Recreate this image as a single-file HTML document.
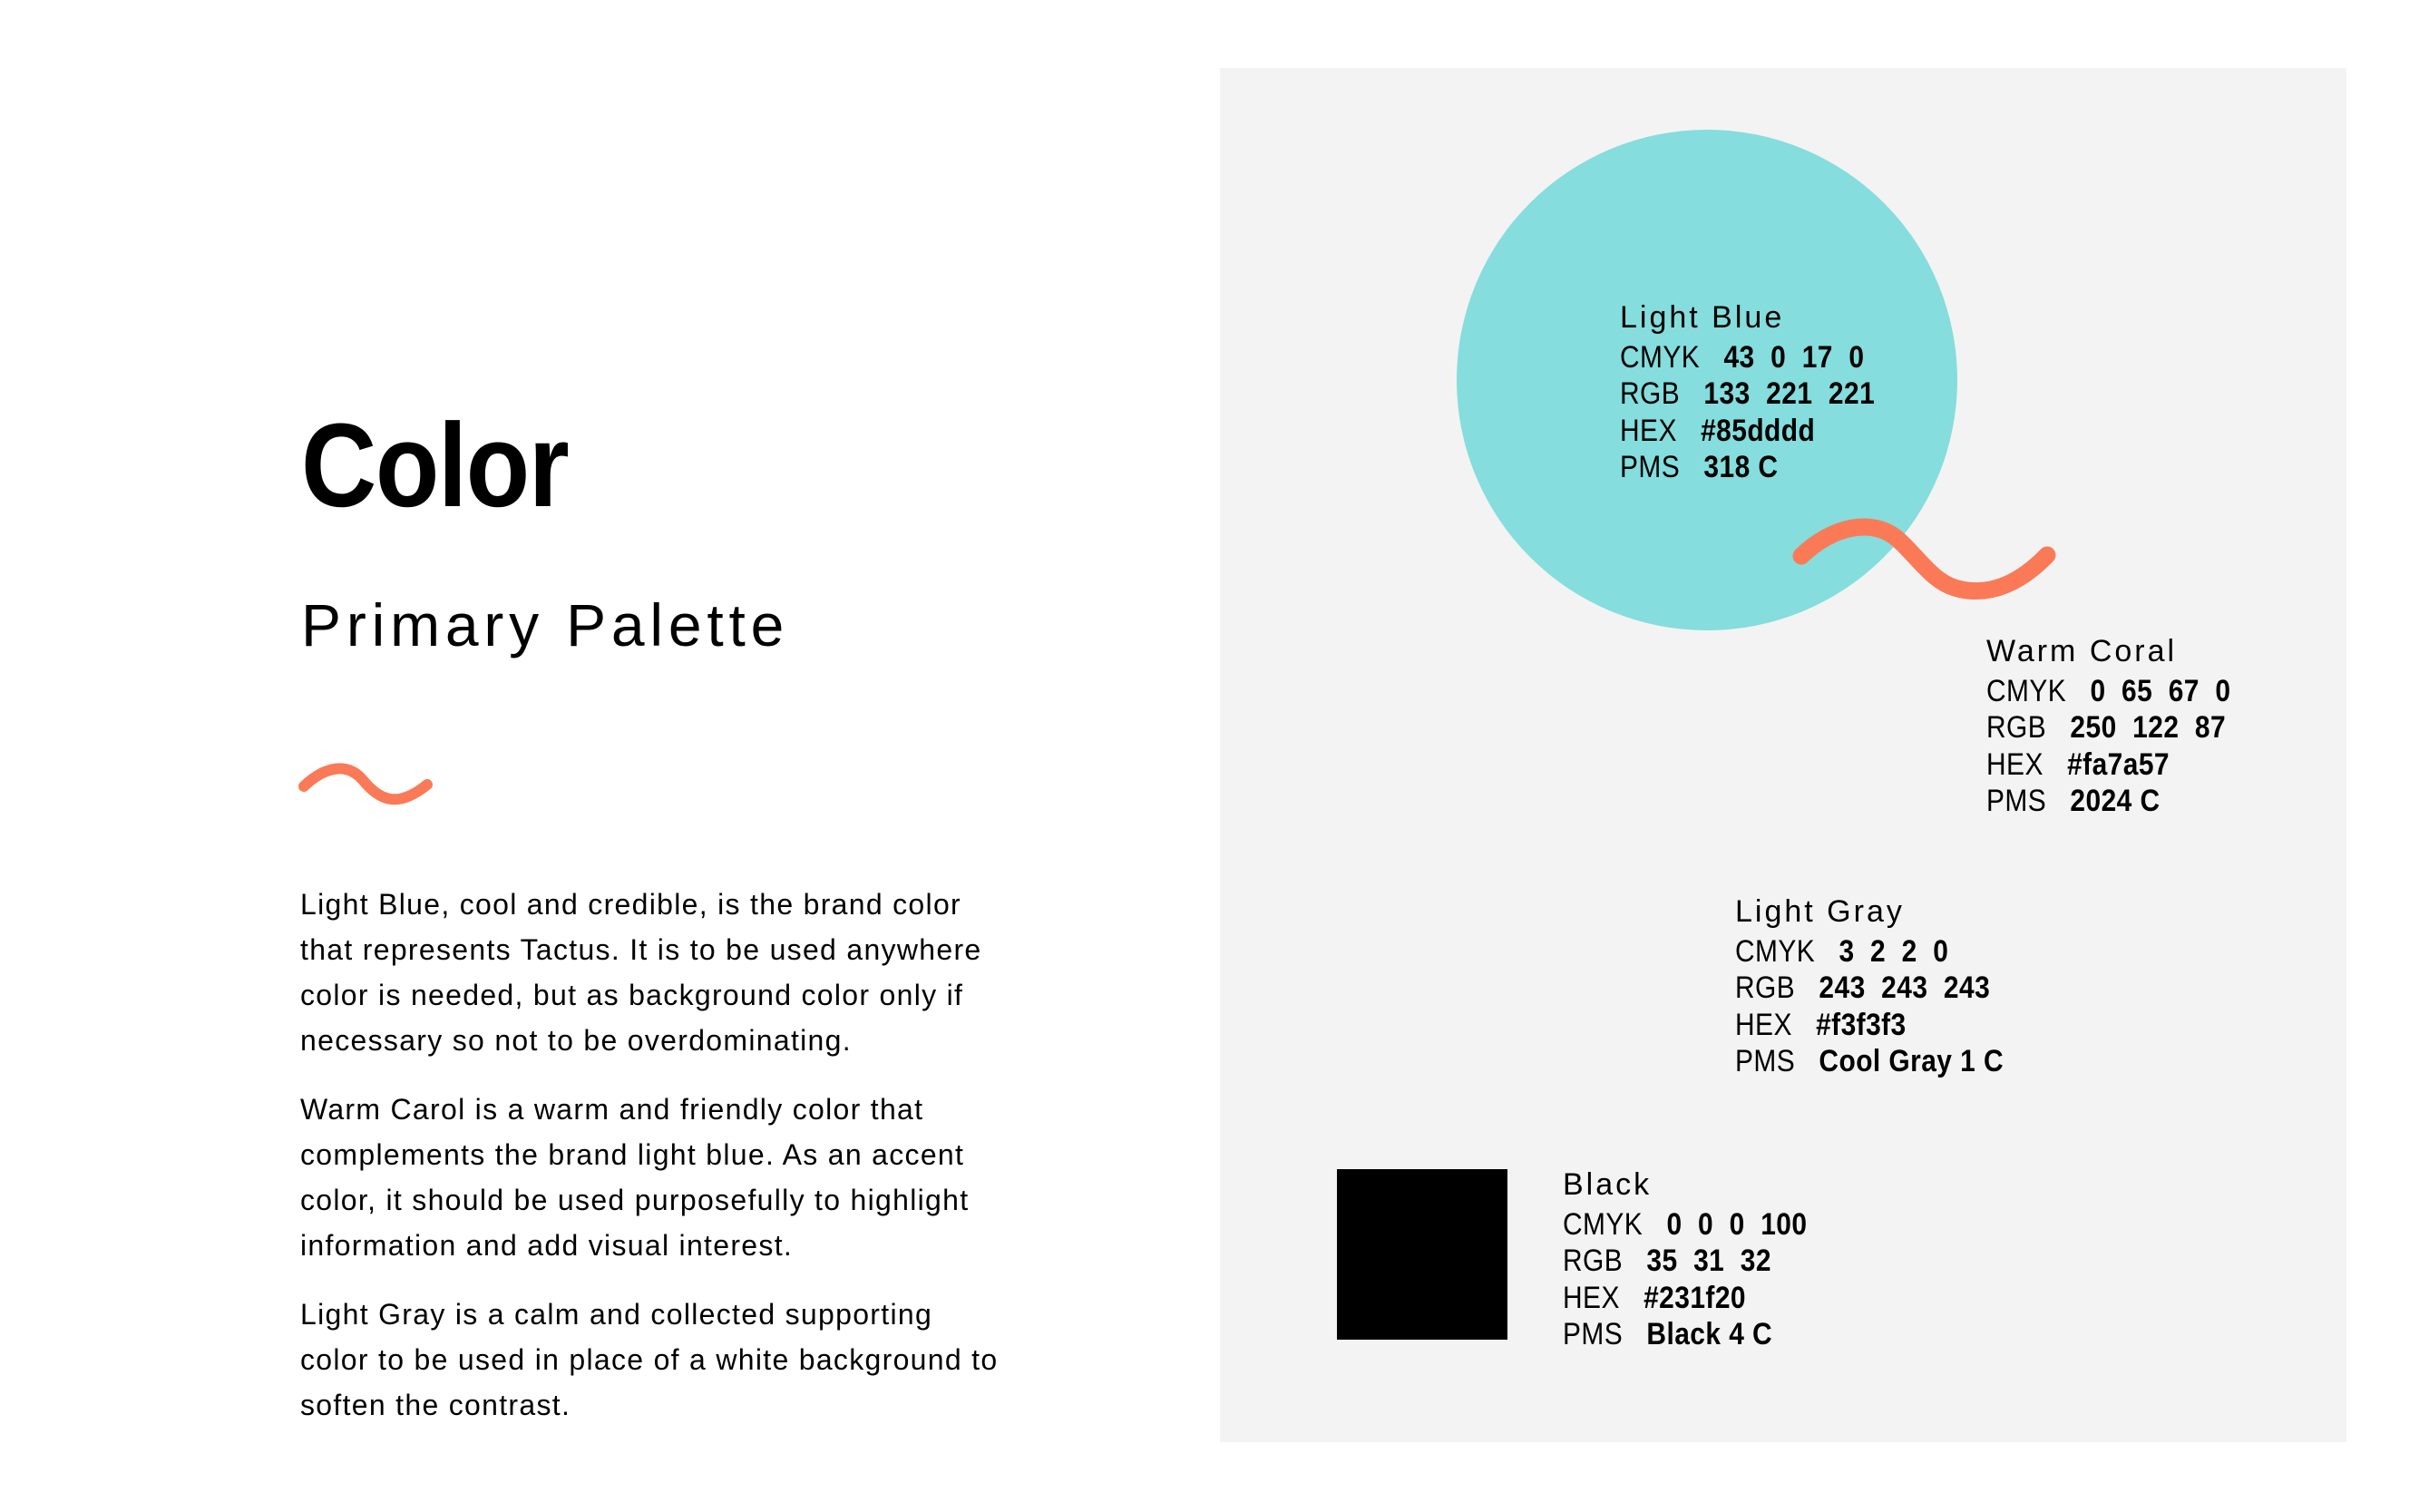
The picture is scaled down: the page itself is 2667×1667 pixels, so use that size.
<!DOCTYPE html>
<html><head><meta charset="utf-8"><style>
*{margin:0;padding:0;box-sizing:border-box}
body{width:2667px;height:1667px;background:#fff;position:relative;overflow:hidden;font-family:"Liberation Sans",sans-serif;color:#000}
.abs{position:absolute}
h1{position:absolute;left:332px;top:447px;font-size:131px;font-weight:bold;letter-spacing:-1.5px;line-height:1;transform:scaleX(0.88);transform-origin:left top}
h2{position:absolute;left:332px;top:656px;font-size:66px;font-weight:normal;letter-spacing:5.8px;line-height:1}
.body{position:absolute;left:331px;top:972px;width:900px;font-size:32px;line-height:50px;letter-spacing:1.3px;white-space:nowrap}
.body p{margin-bottom:26px}
.blk{position:absolute;font-size:33px;line-height:40.5px}
.blk .t{font-size:34px;letter-spacing:3px;margin-bottom:3px}
.blk .r{font-size:34px;white-space:pre;transform:scaleX(0.88);transform-origin:left center;letter-spacing:0.5px}
.blk .r b{font-weight:bold}
</style></head><body>
<h1>Color</h1>
<h2>Primary Palette</h2>
<svg class="abs" style="left:0;top:0" width="2667" height="1667">
<rect x="1345" y="75" width="1242" height="1515" fill="#f3f3f3"/>
<circle cx="1882" cy="419" r="276" fill="#85dddd"/>
<rect x="1474" y="1289" width="188" height="188" fill="#000"/>
<path d="M335 867 C358 845 383 840 400 860 C418 882 438 892 471 865" fill="none" stroke="#fa7a57" stroke-width="12" stroke-linecap="round"/>
<path d="M1986 613 C2020 580 2065 570 2093 595 C2115 615 2130 640 2155 648 C2195 660 2230 640 2257 612" fill="none" stroke="#fa7a57" stroke-width="19" stroke-linecap="round"/>
</svg>
<div class="body">
<p>Light Blue, cool and credible, is the brand color<br>that represents Tactus. It is to be used anywhere<br>color is needed, but as background color only if<br>necessary so not to be overdominating.</p>
<p>Warm Carol is a warm and friendly color that<br>complements the brand light blue. As an accent<br>color, it should be used purposefully to highlight<br>information and add visual interest.</p>
<p>Light Gray is a calm and collected supporting<br>color to be used in place of a white background to<br>soften the contrast.</p>
</div>
<div class="blk" style="left:1786px;top:330px">
<div class="t">Light Blue</div>
<div class="r">CMYK   <b>43  0  17  0</b></div>
<div class="r">RGB   <b>133  221  221</b></div>
<div class="r">HEX   <b>#85dddd</b></div>
<div class="r">PMS   <b>318 C</b></div>
</div>
<div class="blk" style="left:2190px;top:698px">
<div class="t">Warm Coral</div>
<div class="r">CMYK   <b>0  65  67  0</b></div>
<div class="r">RGB   <b>250  122  87</b></div>
<div class="r">HEX   <b>#fa7a57</b></div>
<div class="r">PMS   <b>2024 C</b></div>
</div>
<div class="blk" style="left:1913px;top:985px">
<div class="t">Light Gray</div>
<div class="r">CMYK   <b>3  2  2  0</b></div>
<div class="r">RGB   <b>243  243  243</b></div>
<div class="r">HEX   <b>#f3f3f3</b></div>
<div class="r">PMS   <b>Cool Gray 1 C</b></div>
</div>
<div class="blk" style="left:1723px;top:1286px">
<div class="t">Black</div>
<div class="r">CMYK   <b>0  0  0  100</b></div>
<div class="r">RGB   <b>35  31  32</b></div>
<div class="r">HEX   <b>#231f20</b></div>
<div class="r">PMS   <b>Black 4 C</b></div>
</div>
</body></html>
